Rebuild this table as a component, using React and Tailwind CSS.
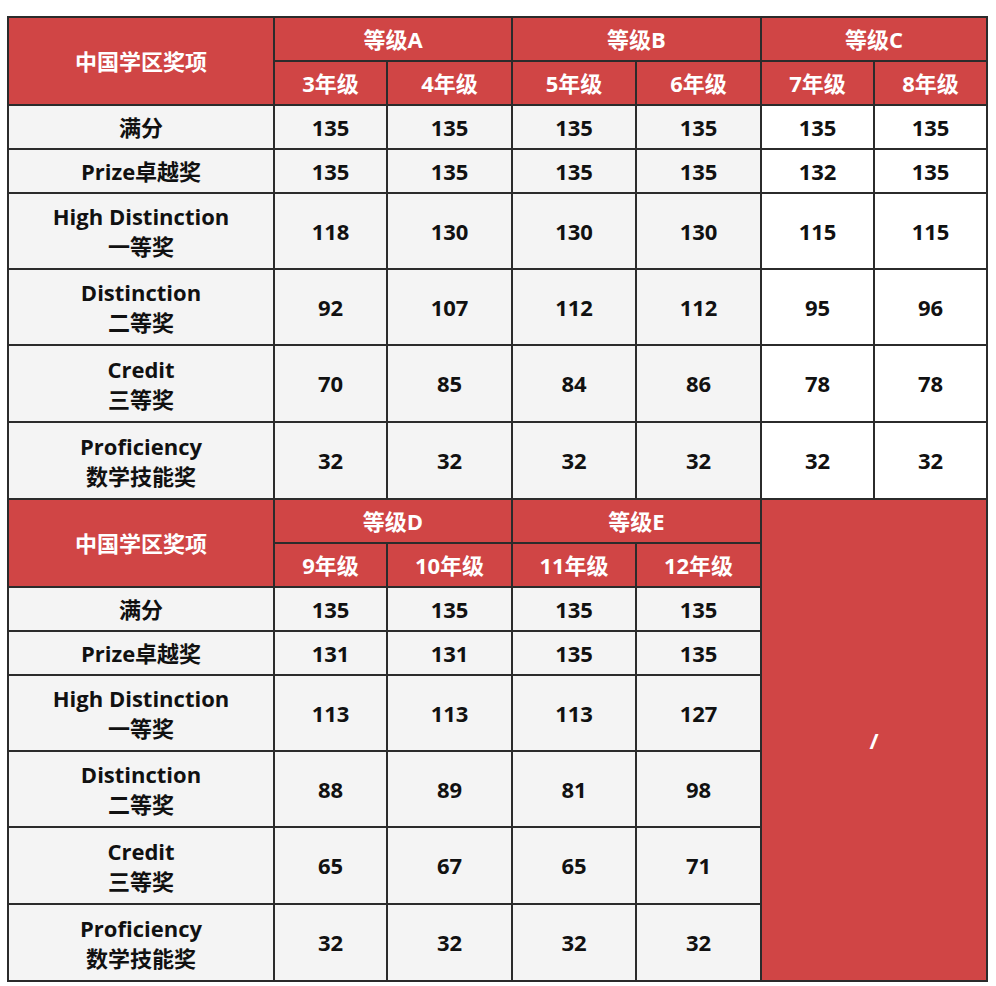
const sections = [
  {
    groups: [
      { name: "等级A", grades: ["3年级", "4年级"] },
      { name: "等级B", grades: ["5年级", "6年级"] },
      { name: "等级C", grades: ["7年级", "8年级"] },
    ],
    rows: [
      ["135", "135", "135", "135", "135", "135"],
      ["135", "135", "135", "135", "132", "135"],
      ["118", "130", "130", "130", "115", "115"],
      ["92", "107", "112", "112", "95", "96"],
      ["70", "85", "84", "86", "78", "78"],
      ["32", "32", "32", "32", "32", "32"],
    ],
  },
  {
    groups: [
      { name: "等级D", grades: ["9年级", "10年级"] },
      { name: "等级E", grades: ["11年级", "12年级"] },
    ],
    rows: [
      ["135", "135", "135", "135"],
      ["131", "131", "135", "135"],
      ["113", "113", "113", "127"],
      ["88", "89", "81", "98"],
      ["65", "67", "65", "71"],
      ["32", "32", "32", "32"],
    ],
  },
];

const awards = [
  ["满分"],
  ["Prize卓越奖"],
  ["High Distinction", "一等奖"],
  ["Distinction", "二等奖"],
  ["Credit", "三等奖"],
  ["Proficiency", "数学技能奖"],
];

const rowHeights = ["h-[44px]", "h-[44px]", "h-[76px]", "h-[76px]", "h-[77px]", "h-[77px]"];

const cell = "border-2 border-[#2b2b2b] text-center align-middle p-0";
const head = `${cell} bg-[#d04545] text-white`;

export default function App() {
  return (
    <div
      className="bg-white min-h-screen pt-[16px] pl-[7px] font-bold text-[22px] text-[#111]"
      style={{ fontFamily: '"Open Sans", "Noto Sans CJK SC", sans-serif' }}
    >
      <table className="table-fixed border-collapse w-[979px]">
        <colgroup>
          <col className="w-[266px]" />
          <col className="w-[113px]" />
          <col className="w-[125px]" />
          <col className="w-[124px]" />
          <col className="w-[125px]" />
          <col className="w-[113px]" />
          <col className="w-[113px]" />
        </colgroup>
        {sections.map((sec, si) => (
          <tbody key={si}>
            <tr className="h-[44px]">
              <th rowSpan={2} className={head}>
                中国学区奖项
              </th>
              {sec.groups.map((g) => (
                <th key={g.name} colSpan={2} className={head}>
                  {g.name}
                </th>
              ))}
              {si === 1 && (
                <td rowSpan={8} colSpan={2} className={`${head} font-bold`}>
                  /
                </td>
              )}
            </tr>
            <tr className="h-[44px]">
              {sec.groups.map((g) =>
                g.grades.map((gr) => (
                  <th key={gr} className={head}>
                    {gr}
                  </th>
                ))
              )}
            </tr>
            {sec.rows.map((vals, ri) => (
              <tr key={ri} className={rowHeights[ri]}>
                <td className={`${cell} bg-[#f4f4f4] leading-[30px]`}>
                  {awards[ri].map((line) => (
                    <div key={line}>{line}</div>
                  ))}
                </td>
                {vals.map((v, vi) => (
                  <td
                    key={vi}
                    className={`${cell} ${vi >= 4 ? "bg-white" : "bg-[#f4f4f4]"}`}
                  >
                    {v}
                  </td>
                ))}
              </tr>
            ))}
          </tbody>
        ))}
      </table>
    </div>
  );
}
